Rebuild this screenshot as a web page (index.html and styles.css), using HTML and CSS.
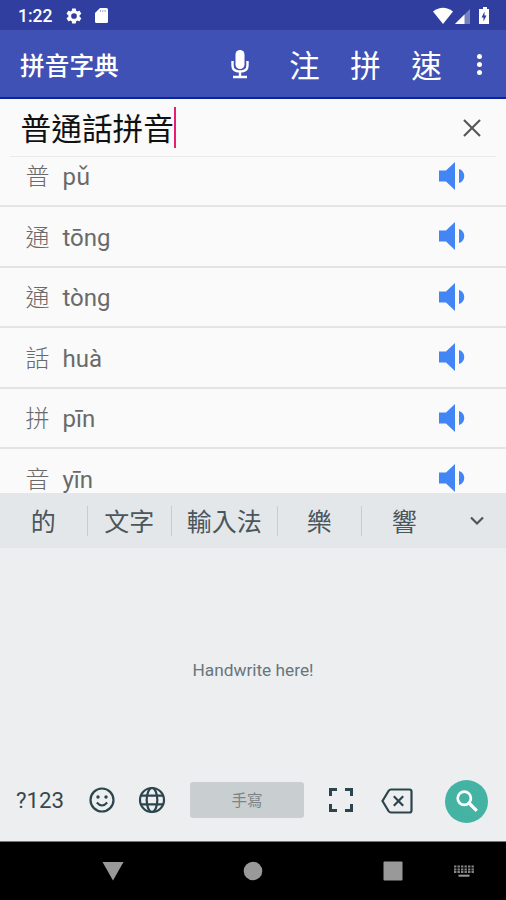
FILE: index.html
```html
<!DOCTYPE html>
<html lang="zh-Hant">

<head>
    <meta charset="UTF-8">
    <meta name="viewport" content="width=device-width, initial-scale=1.0">
    <title>拼音字典</title>
    <link rel="stylesheet" href="styles.css">
</head>

<body>
    <svg width="0" height="0" class="defs">
        <symbol id="speaker" viewBox="0 0 28 30">
            <path d="M1 9.500h7L17 1v28l-9-8.500H1z" />
            <path d="M21 8c7 2 7 12 0 14z" />
        </symbol>
    </svg>

    <div class="status">
        <span class="time">1:22</span>
        <svg class="gear" width="18" height="18" viewBox="0 0 24 24"><path fill="#fff" fill-rule="evenodd" d="M19.4 13a7.500 7.500 0 0 0 0-2l2.100-1.600c.2-.2.300-.4.100-.7l-2-3.400c-.1-.3-.4-.3-.6-.2l-2.500 1a7.300 7.300 0 0 0-1.700-1l-.4-2.700c0-.2-.2-.4-.5-.4h-4c-.2 0-.4.200-.5.400L9 5.100c-.6.200-1.200.6-1.700 1l-2.500-1c-.2-.1-.5 0-.6.200l-2 3.400c-.1.300-.1.500.1.700L4.500 11a8 8 0 0 0 0 2l-2.200 1.600c-.2.200-.2.500-.1.700l2 3.400c.1.300.4.300.6.200l2.500-1c.5.400 1.100.8 1.700 1l.4 2.700c0 .2.300.4.500.4h4c.3 0 .5-.2.500-.4l.4-2.700c.6-.2 1.200-.6 1.700-1l2.500 1c.2.100.5 0 .6-.2l2-3.400c.1-.2.100-.5-.1-.7zM12 15.800a3.800 3.800 0 1 1 0-7.600 3.800 3.800 0 0 1 0 7.600z" /></svg>
        <svg class="card" width="13" height="15" viewBox="0 0 13 15"><path fill="#fff" d="M5 0h6.500Q13 0 13 1.500v12q0 1.500-1.500 1.500h-10Q0 15 0 13.500V5z" /><path stroke="#9aa3d3" stroke-width="1" d="M5.500 2v2M7.800 2v2M10.100 2v2" /></svg>
        <svg class="signals" width="58" height="18" viewBox="0 0 58 18">
            <path fill="#fff" d="M0 4.500Q10-3 20 4.500L10 17z" />
            <path fill="#7780bf" d="M37 2v15H22z" />
            <path fill="#fff" d="M31.500 7.500V17H22z" />
            <path fill="#fff" d="M48 2h2V0h4v2h2v15H46V2z" />
            <path fill="#303f9f" d="M51.500 4.500l-3 6h2v4l3-6h-2z" />
        </svg>
    </div>

    <div class="toolbar">
        <h1>拼音字典</h1>
        <div class="action mic">
            <svg width="18" height="29" viewBox="0 0 18 29">
                <rect x="4.500" y="0" width="9" height="19" rx="4.500" fill="#fff" />
                <path d="M1.500 11v4.500q0 6 7.500 6t7.500-6V11M9 21v6M2 27h14" fill="none" stroke="#fff" stroke-width="2.400" />
            </svg>
        </div>
        <div class="action">注</div>
        <div class="action">拼</div>
        <div class="action">速</div>
        <div class="more"><i></i><i></i><i></i></div>
    </div>

    <div class="search">
        <span class="query">普通話拼音</span><span class="caret"></span>
        <svg class="clear" width="18" height="18" viewBox="0 0 18 18"><path d="M1 1l16 16M17 1L1 17" stroke="#555" stroke-width="2.100" /></svg>
    </div>

    <div class="list">
        <div class="row"><span class="han">普</span><span class="pinyin">pǔ</span><svg class="speak"><use href="#speaker" /></svg></div>
        <div class="row"><span class="han">通</span><span class="pinyin">tōng</span><svg class="speak"><use href="#speaker" /></svg></div>
        <div class="row"><span class="han">通</span><span class="pinyin">tòng</span><svg class="speak"><use href="#speaker" /></svg></div>
        <div class="row"><span class="han">話</span><span class="pinyin">huà</span><svg class="speak"><use href="#speaker" /></svg></div>
        <div class="row"><span class="han">拼</span><span class="pinyin">pīn</span><svg class="speak"><use href="#speaker" /></svg></div>
        <div class="row"><span class="han">音</span><span class="pinyin">yīn</span><svg class="speak"><use href="#speaker" /></svg></div>
    </div>

    <div class="candidates">
        <div class="word">的</div>
        <div class="word">文字</div>
        <div class="word wide">輸入法</div>
        <div class="word">樂</div>
        <div class="word">響</div>
        <svg class="expand" width="16" height="10" viewBox="0 0 16 10"><path d="M2 1.500l6 6 6-6" fill="none" stroke="#4a565c" stroke-width="2.200" /></svg>
    </div>

    <div class="pad">Handwrite here!</div>

    <div class="keys">
        <span class="symbols">?123</span>
        <svg class="smile" width="26" height="26" viewBox="0 0 26 26">
            <circle cx="13" cy="13" r="11.500" fill="none" stroke="#2c444c" stroke-width="2.200" />
            <circle cx="9" cy="10" r="1.700" fill="#2c444c" />
            <circle cx="17" cy="10" r="1.700" fill="#2c444c" />
            <path d="M7.800 15.500q5.200 6 10.400 0" fill="none" stroke="#2c444c" stroke-width="2" />
        </svg>
        <svg class="globe" width="28" height="28" viewBox="0 0 28 28" fill="none" stroke="#2c444c" stroke-width="2.200">
            <circle cx="14" cy="14" r="12" />
            <ellipse cx="14" cy="14" rx="5.300" ry="12" />
            <path d="M3 9.700h22M3 18.300h22" />
        </svg>
        <div class="space">手寫</div>
        <svg class="full" width="24" height="24" viewBox="0 0 24 24"><path d="M1.500 8V1.500H8M16 1.500h6.500V8M22.500 16v6.500H16M8 22.500H1.500V16" fill="none" stroke="#2c444c" stroke-width="3" /></svg>
        <svg class="backspace" width="32" height="26" viewBox="0 0 32 26" fill="none" stroke="#2c444c" stroke-width="2.200">
            <path d="M10 1.500h18.500q2 0 2 2v19q0 2-2 2H10q-1.500 0-2.500-1.500L1.500 13l6-10q1-1.500 2.500-1.500z" />
            <path d="M12.800 8.300l9.400 9.400M22.200 8.300l-9.400 9.400" />
        </svg>
        <div class="go">
            <svg width="22" height="22" viewBox="0 0 22 22" fill="none" stroke="#fff" stroke-width="2.700"><circle cx="8.300" cy="8.300" r="6.600" /><path d="M13 13l7.800 7.800" stroke-width="3.200" /></svg>
        </div>
    </div>

    <div class="nav">
        <svg width="22" height="20" viewBox="0 0 22 20"><path d="M.5 1h21L11 19.500z" fill="#999" /></svg>
        <svg width="20" height="20" viewBox="0 0 20 20"><circle cx="10" cy="10" r="9.300" fill="#999" /></svg>
        <svg width="20" height="20" viewBox="0 0 20 20"><rect x=".5" y=".5" width="19" height="19" rx="1" fill="#999" /></svg>
        <svg class="keyboard" width="20" height="12" viewBox="0 0 20 12"><path d="M0 1.500h20M0 4.500h20M0 7h20" stroke="#858585" stroke-width="1.800" stroke-dasharray="2.400 1.100" /><path d="M4.500 10.700h11" stroke="#999" stroke-width="2" /></svg>
    </div>
</body>

</html>
```
FILE: styles.css
```css
body {
    margin: 0;
    width: 506px;
    height: 900px;
    overflow: hidden;
    display: flex;
    flex-direction: column;
    background-color: #fafafa;
    font-family: Roboto, "Noto Sans CJK TC", sans-serif;
}

body > div {
    box-sizing: border-box;
    flex-shrink: 0;
}

svg {
    display: block;
    flex-shrink: 0;
}

.defs {
    position: absolute;
}

.status {
    height: 30px;
    display: flex;
    align-items: center;
    padding: 1px 15px 0 18px;
    background-color: #303f9f;
    color: white;
}

.time {
    width: 47px;
    font-size: 17.5px;
    font-weight: 500;
}

.card {
    margin-left: 12px;
}

.signals {
    margin-left: auto;
}

.toolbar {
    height: 69px;
    display: flex;
    align-items: center;
    padding: 2px 0 0 20px;
    background-color: #3f51b5;
    border-bottom: 2px solid #0b249b;
    color: white;
}

.toolbar h1 {
    margin: 0;
    width: 186px;
    padding-top: 5px;
    font-size: 24.7px;
    font-weight: 500;
    line-height: 36px;
}

.action {
    width: 61px;
    padding-top: 5px;
    font-size: 30.5px;
    line-height: 44px;
    text-align: center;
}

.mic {
    width: 68px;
    padding-top: 0;
    display: flex;
    justify-content: center;
}

.more {
    width: 45px;
    display: flex;
    flex-direction: column;
    align-items: center;
    gap: 3px;
}

.more i {
    width: 5px;
    height: 5px;
    border-radius: 50%;
    background-color: white;
}

.search {
    height: 58px;
    display: flex;
    align-items: center;
    margin: 0 10px;
    padding: 0 15px 0 10.500px;
    border-bottom: 1px solid #e9e9e9;
}

.query {
    padding-top: 4px;
    font-size: 30.7px;
    line-height: 44px;
    color: #111;
}

.caret {
    width: 2px;
    height: 41px;
    background-color: #e91e70;
}

.clear {
    margin-left: auto;
}

.list {
    height: 336px;
    overflow: hidden;
    color: #6a6a6a;
}

.row {
    box-sizing: border-box;
    height: 60.500px;
    display: flex;
    align-items: center;
    padding: 0 40px 0 25.500px;
    border-bottom: 2px solid #e4e4e4;
    font-size: 24px;
}

.row:first-child {
    margin-top: -10.500px;
}

.han {
    width: 37px;
    padding-top: 3px;
    font-weight: 300;
    line-height: 34px;
}

.pinyin {
    padding-top: 3px;
    line-height: 28px;
}

.speak {
    width: 28px;
    height: 30px;
    margin-left: auto;
    fill: #4285f4;
}

.candidates {
    height: 55px;
    display: flex;
    align-items: center;
    padding-top: 1px;
    background-color: #e4e7e9;
    color: #4a565c;
}

.word {
    box-sizing: border-box;
    width: 84.500px;
    height: 30px;
    border-right: 1px solid #c8cccf;
    font-size: 25px;
    line-height: 34px;
    text-align: center;
}

.word:first-child {
    width: 87.500px;
}

.wide {
    width: 105.500px;
}

.word:nth-child(5) {
    border: none;
}

.expand {
    margin-left: 22px;
}

.pad {
    height: 211px;
    padding-top: 111px;
    background-color: #eceef0;
    color: #69757b;
    font-size: 17.3px;
    line-height: 22px;
    text-align: center;
}

.keys {
    height: 82px;
    display: flex;
    align-items: center;
    background-color: #eceef0;
    color: #37474f;
}

.symbols {
    width: 73px;
    padding-left: 16px;
    font-size: 22.3px;
}

.globe {
    margin-left: 23px;
}

.space {
    width: 114px;
    height: 36px;
    margin: 0 25px 0 24px;
    border-radius: 3px;
    background-color: #c9ced0;
    color: #7d8487;
    font-size: 15.5px;
    line-height: 38px;
    text-align: center;
}

.backspace {
    margin: 2px 0 0 28px;
}

.go {
    width: 43px;
    height: 43px;
    margin: 2px 0 0 32px;
    display: flex;
    align-items: center;
    justify-content: center;
    border-radius: 50%;
    background-color: #45b3a4;
}

.nav {
    height: 59px;
    display: flex;
    align-items: center;
    padding-left: 102px;
    border-top: 1px solid #777;
    background-color: black;
}

.nav svg + svg {
    margin-left: 120px;
}

.nav svg:nth-child(2) {
    margin-left: 119px;
}

.nav svg.keyboard {
    margin-left: 51px;
}
```
